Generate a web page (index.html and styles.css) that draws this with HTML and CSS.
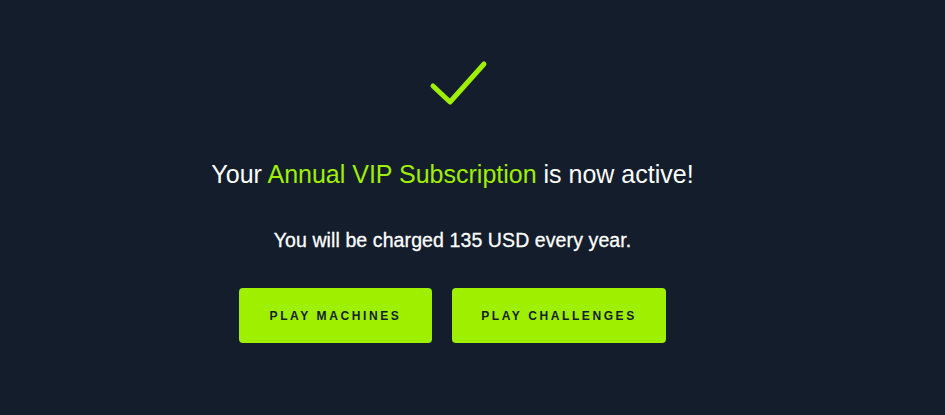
FILE: index.html
```html
<!DOCTYPE html>
<html>
<head>
<meta charset="utf-8">
<link rel="stylesheet" href="styles.css">
</head>
<body>
<main class="page">
  <svg class="check" width="60" height="50" viewBox="0 0 60 50">
    <path d="M5 27 L22 43 L56 5" fill="none" stroke="#9fef00" stroke-width="5" stroke-linecap="round" stroke-linejoin="round"/>
  </svg>
  <h1 class="title">Your <span class="accent">Annual VIP Subscription</span> is now active!</h1>
  <p class="sub">You will be charged 135 USD every year.</p>
  <div class="actions">
    <a class="btn btn-machines">PLAY MACHINES</a>
    <a class="btn btn-challenges">PLAY CHALLENGES</a>
  </div>
</main>
</body>
</html>
```
FILE: styles.css
```css
html, body {
  margin: 0;
  height: 100%;
  background: #141d2b;
}
body {
  font-family: "Liberation Sans", Arial, sans-serif;
  color: #ffffff;
}
.page {
  display: flex;
  flex-direction: column;
  align-items: center;
  padding: 59px 40px 0 0;
}
.check {
  display: block;
  margin-left: 11px;
}
.title {
  margin: 50px 0 0;
  font-size: 25px;
  font-weight: 400;
  line-height: 30px;
}
.accent {
  color: #9fef00;
}
.sub {
  margin: 39px 0 0;
  font-size: 19.5px;
  font-weight: 400;
  letter-spacing: 0.1px;
  line-height: 24px;
  -webkit-text-stroke: 0.3px #ffffff;
}
.actions {
  display: flex;
  gap: 20px;
  margin-top: 36px;
}
.btn {
  display: flex;
  align-items: center;
  justify-content: center;
  height: 55px;
  background: #9fef00;
  color: #141d2b;
  border-radius: 4px;
  font-size: 12px;
  font-weight: 700;
  letter-spacing: 2.6px;
}
.btn-machines { width: 193px; }
.btn-challenges { width: 214px; }
```
